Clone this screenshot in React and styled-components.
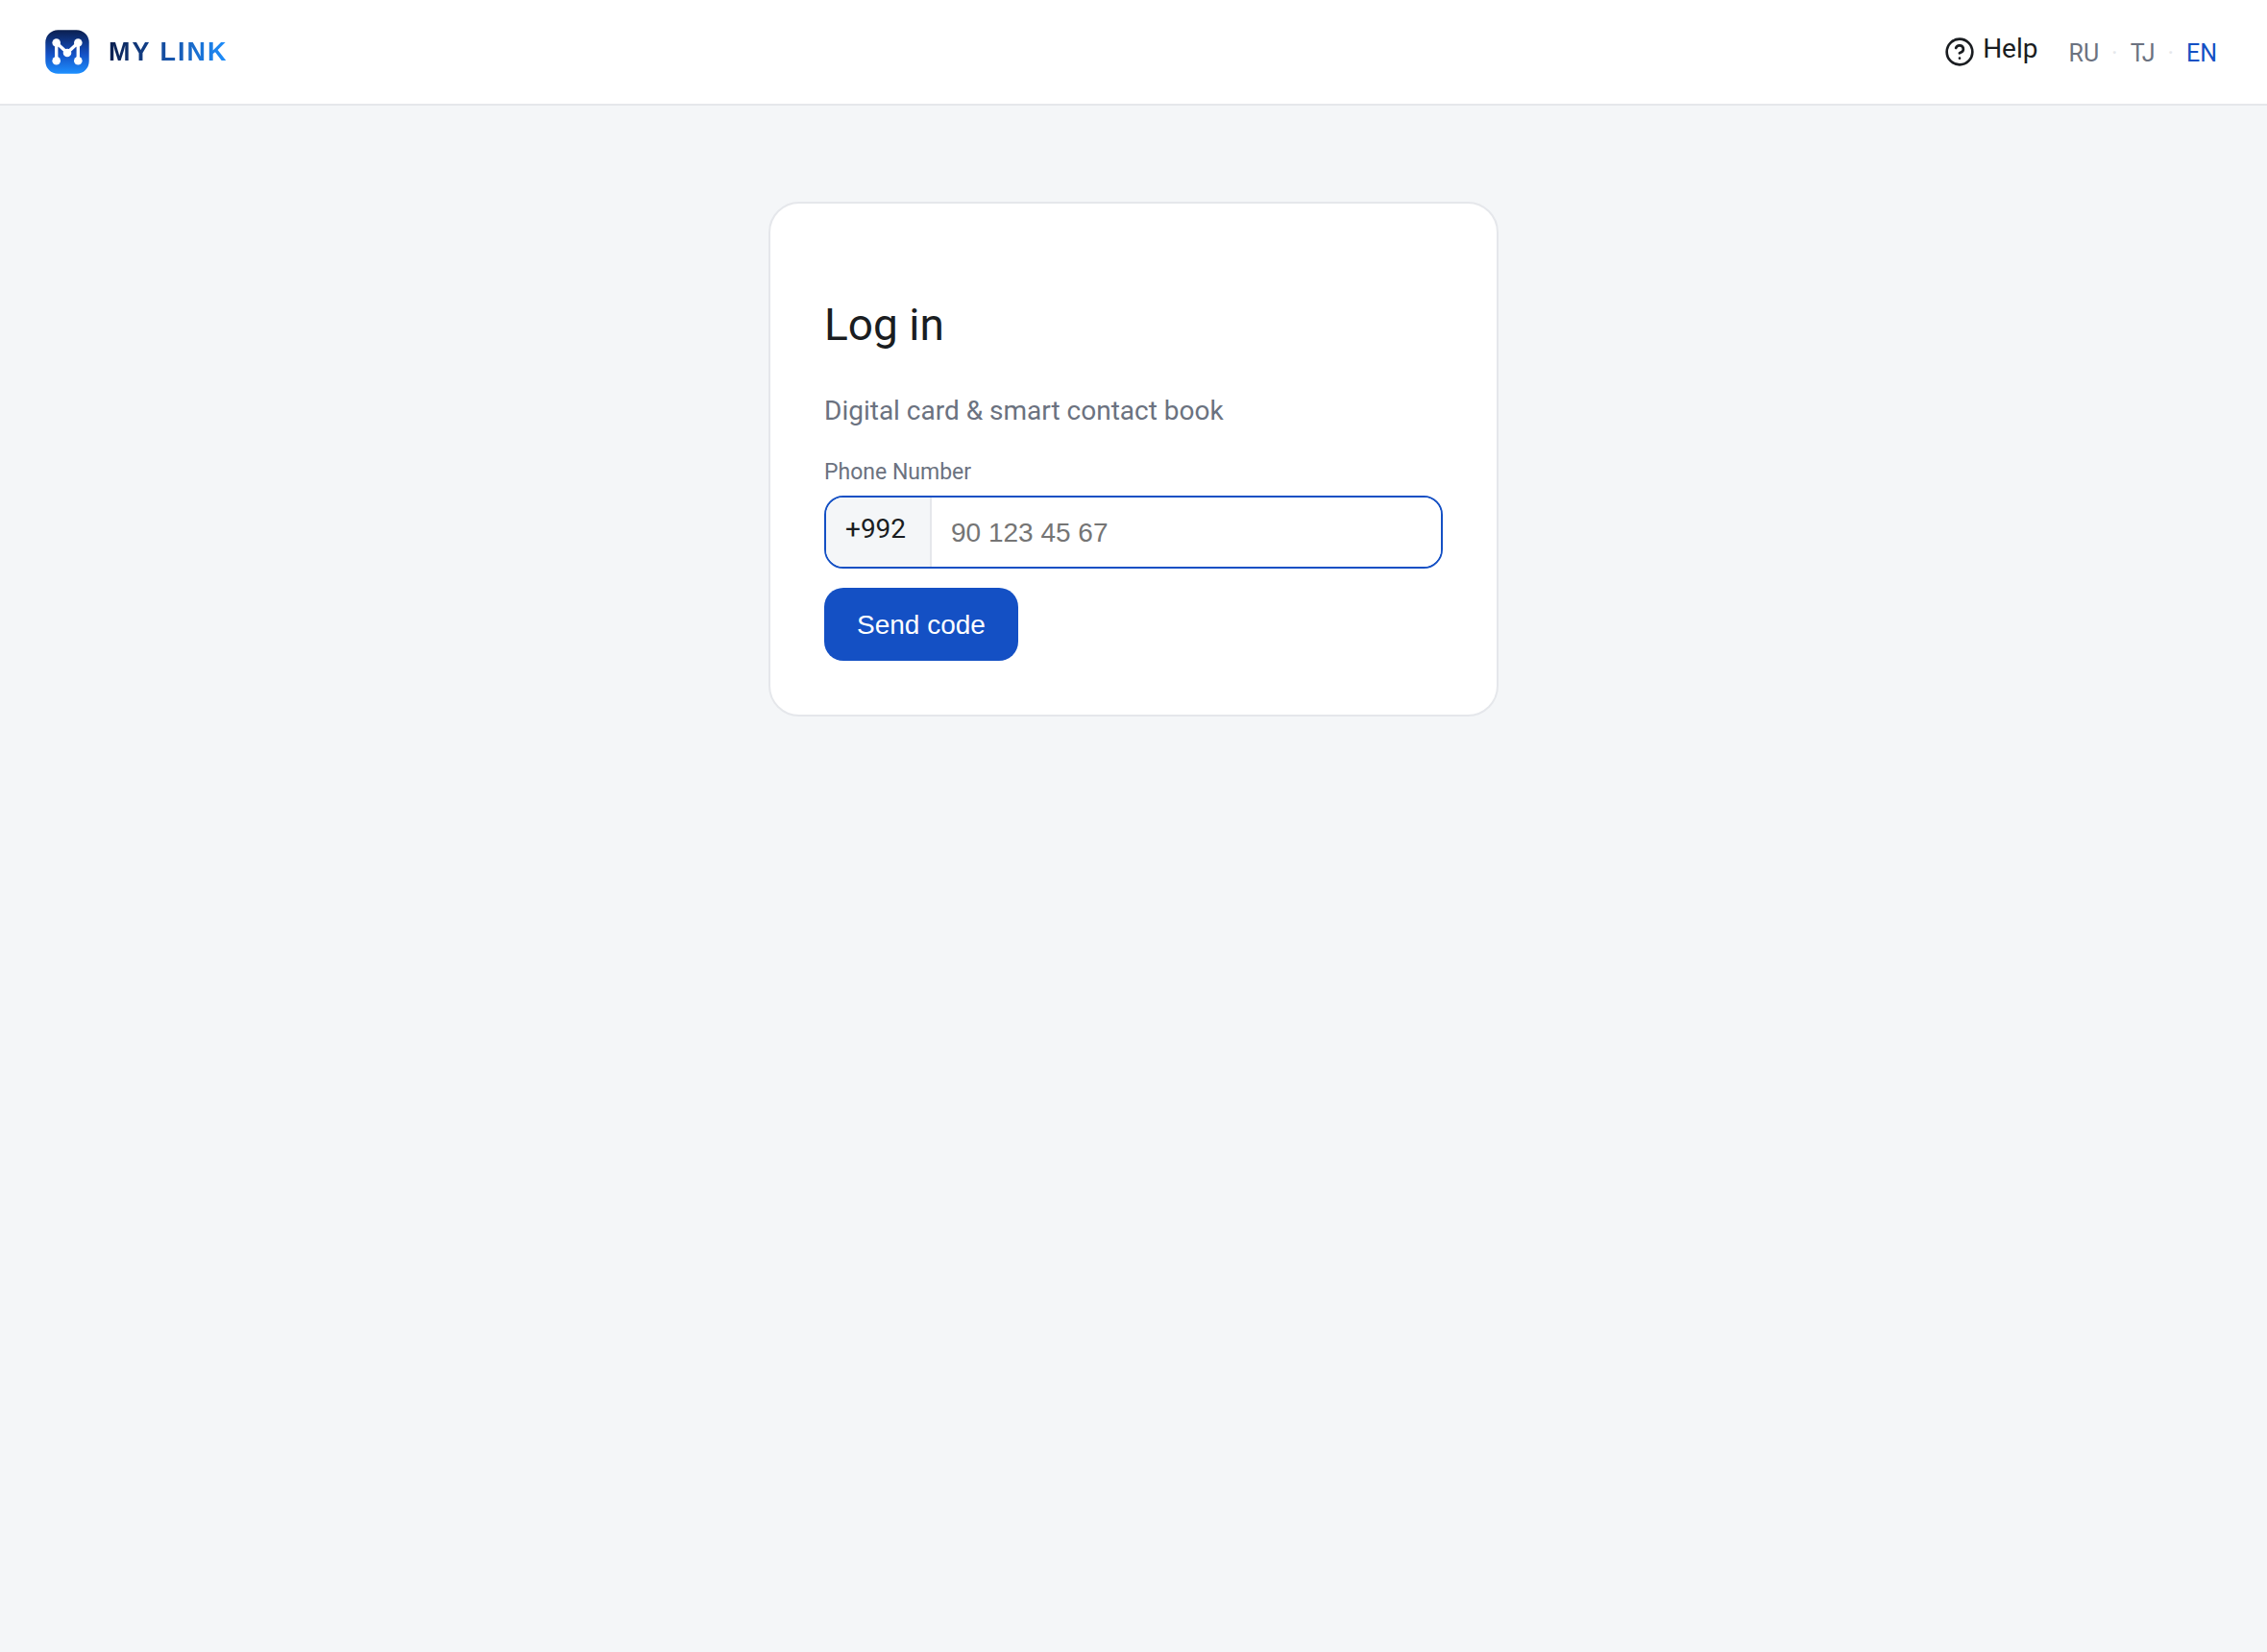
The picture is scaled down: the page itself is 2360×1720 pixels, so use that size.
import { useState } from "react";
import styled, { createGlobalStyle } from "styled-components";
import { CircleQuestionMark } from "lucide-react";

const GlobalStyle = createGlobalStyle`
    * {
        box-sizing: border-box;
    }
    body {
        margin: 0;
        background: #f4f6f8;
        color: #1a1d21;
        font-family: Roboto, "Liberation Sans", sans-serif;
        font-size: 28px;
        line-height: 40px;
    }
`;

const Header = styled.header`
    display: flex;
    align-items: center;
    justify-content: space-between;
    padding: 30px 40px;
    background: white;
    border-bottom: 2px solid #e5e7eb;
`;

const Brand = styled.a`
    display: flex;
    align-items: center;
    gap: 19px;
    padding: 0 6px;
    text-decoration: none;
    svg {
        width: 48px;
        height: 48px;
    }
    span {
        font-family: "Liberation Sans", Arial, sans-serif;
        font-size: 27px;
        font-weight: 700;
        letter-spacing: 2px;
        background: linear-gradient(90deg, #0b1f4f, #1652a8 50%, #1e90ff);
        background-clip: text;
        color: transparent;
    }
`;

const HeaderRight = styled.div`
    display: flex;
    align-items: center;
    gap: 20px;
`;

const HelpLink = styled.a`
    display: flex;
    align-items: center;
    gap: 8px;
    color: #1a1d21;
    text-decoration: none;
    span {
        padding-bottom: 6px;
    }
`;

const LangList = styled.nav`
    display: flex;
    align-items: center;
    gap: 1px;
    padding-top: 4px;
    font-size: 25px;
    color: #e5e7eb;
`;

const LangButton = styled.button`
    padding: 0 12px;
    border: none;
    background: none;
    font: inherit;
    color: ${(props) => (props.$active ? "#1450c4" : "#6b7280")};
    cursor: pointer;
`;

const Main = styled.main`
    display: flex;
    justify-content: center;
    padding: 100px 32px;
`;

const LoginCard = styled.form`
    width: 100%;
    max-width: 760px;
    padding: 56px;
    background: white;
    border: 2px solid #e5e7eb;
    border-radius: 32px;
    h1 {
        margin: 40px 0;
        font-size: 46px;
        font-weight: 400;
        line-height: 60px;
    }
    p {
        margin: 0 0 28px;
        color: #6b7280;
    }
    label {
        display: block;
        margin-bottom: 8px;
        font-size: 23px;
        line-height: 32px;
        color: #6b7280;
    }
`;

const PhoneField = styled.div`
    display: flex;
    height: 76px;
    margin-bottom: 20px;
    border: 2px solid #1450c4;
    border-radius: 20px;
    overflow: hidden;
    span {
        display: flex;
        align-items: center;
        min-width: 110px;
        padding: 0 20px 6px;
        background: #f4f6f8;
        border-right: 2px solid #e5e7eb;
    }
    input {
        flex: 1;
        min-width: 0;
        padding: 2px 20px 0;
        border: none;
        outline: none;
        background: white;
        color: #1a1d21;
        font-family: "Liberation Sans", Arial, sans-serif;
        font-size: 28px;
        &::placeholder {
            color: #757575;
        }
    }
`;

const SubmitButton = styled.button`
    height: 76px;
    padding: 2px 34px 0;
    border: none;
    border-radius: 20px;
    background: #1450c4;
    color: white;
    font-family: "Liberation Sans", Arial, sans-serif;
    font-size: 28px;
    cursor: pointer;
`;

const LogoIcon = () => (
    <svg viewBox="0 0 48 48" aria-hidden="true">
        <defs>
            <linearGradient id="logoFill" x1="0" y1="0" x2="0" y2="1">
                <stop offset="0" stopColor="#0b1f4f" />
                <stop offset="0.55" stopColor="#1450c4" />
                <stop offset="1" stopColor="#1e90ff" />
            </linearGradient>
        </defs>
        <rect
            x="1.3"
            y="1.3"
            width="45.4"
            height="45.4"
            rx="13"
            fill="url(#logoFill)"
        />
        <path
            d="M12.7 33.3V14.5L24 25l11.3-10.5v18.8"
            fill="none"
            stroke="white"
            strokeWidth="3.4"
            strokeLinejoin="round"
        />
        <g fill="white">
            <circle cx="12.7" cy="14.5" r="4.3" />
            <circle cx="35.3" cy="14.5" r="4.3" />
            <circle cx="24" cy="25" r="4.3" />
            <circle cx="12.7" cy="33.3" r="4.3" />
            <circle cx="35.3" cy="33.3" r="4.3" />
        </g>
    </svg>
);

const LanguageSwitch = () => {
    const [lang, setLang] = useState("EN");

    return (
        <LangList aria-label="Language">
            <LangButton $active={lang === "RU"} onClick={() => setLang("RU")}>
                RU
            </LangButton>
            ·
            <LangButton $active={lang === "TJ"} onClick={() => setLang("TJ")}>
                TJ
            </LangButton>
            ·
            <LangButton $active={lang === "EN"} onClick={() => setLang("EN")}>
                EN
            </LangButton>
        </LangList>
    );
};

const App = () => {
    const [phone, setPhone] = useState("");

    return (
        <>
            <GlobalStyle />
            <Header>
                <Brand href="/">
                    <LogoIcon />
                    <span>MY LINK</span>
                </Brand>
                <HeaderRight>
                    <HelpLink href="/help">
                        <CircleQuestionMark size={32} />
                        <span>Help</span>
                    </HelpLink>
                    <LanguageSwitch />
                </HeaderRight>
            </Header>
            <Main>
                <LoginCard onSubmit={(e) => e.preventDefault()}>
                    <h1>Log in</h1>
                    <p>Digital card &amp; smart contact book</p>
                    <label htmlFor="phone">Phone Number</label>
                    <PhoneField>
                        <span>+992</span>
                        <input
                            id="phone"
                            type="tel"
                            placeholder="90 123 45 67"
                            value={phone}
                            onChange={(e) => setPhone(e.target.value)}
                        />
                    </PhoneField>
                    <SubmitButton type="submit">Send code</SubmitButton>
                </LoginCard>
            </Main>
        </>
    );
};

export default App;
